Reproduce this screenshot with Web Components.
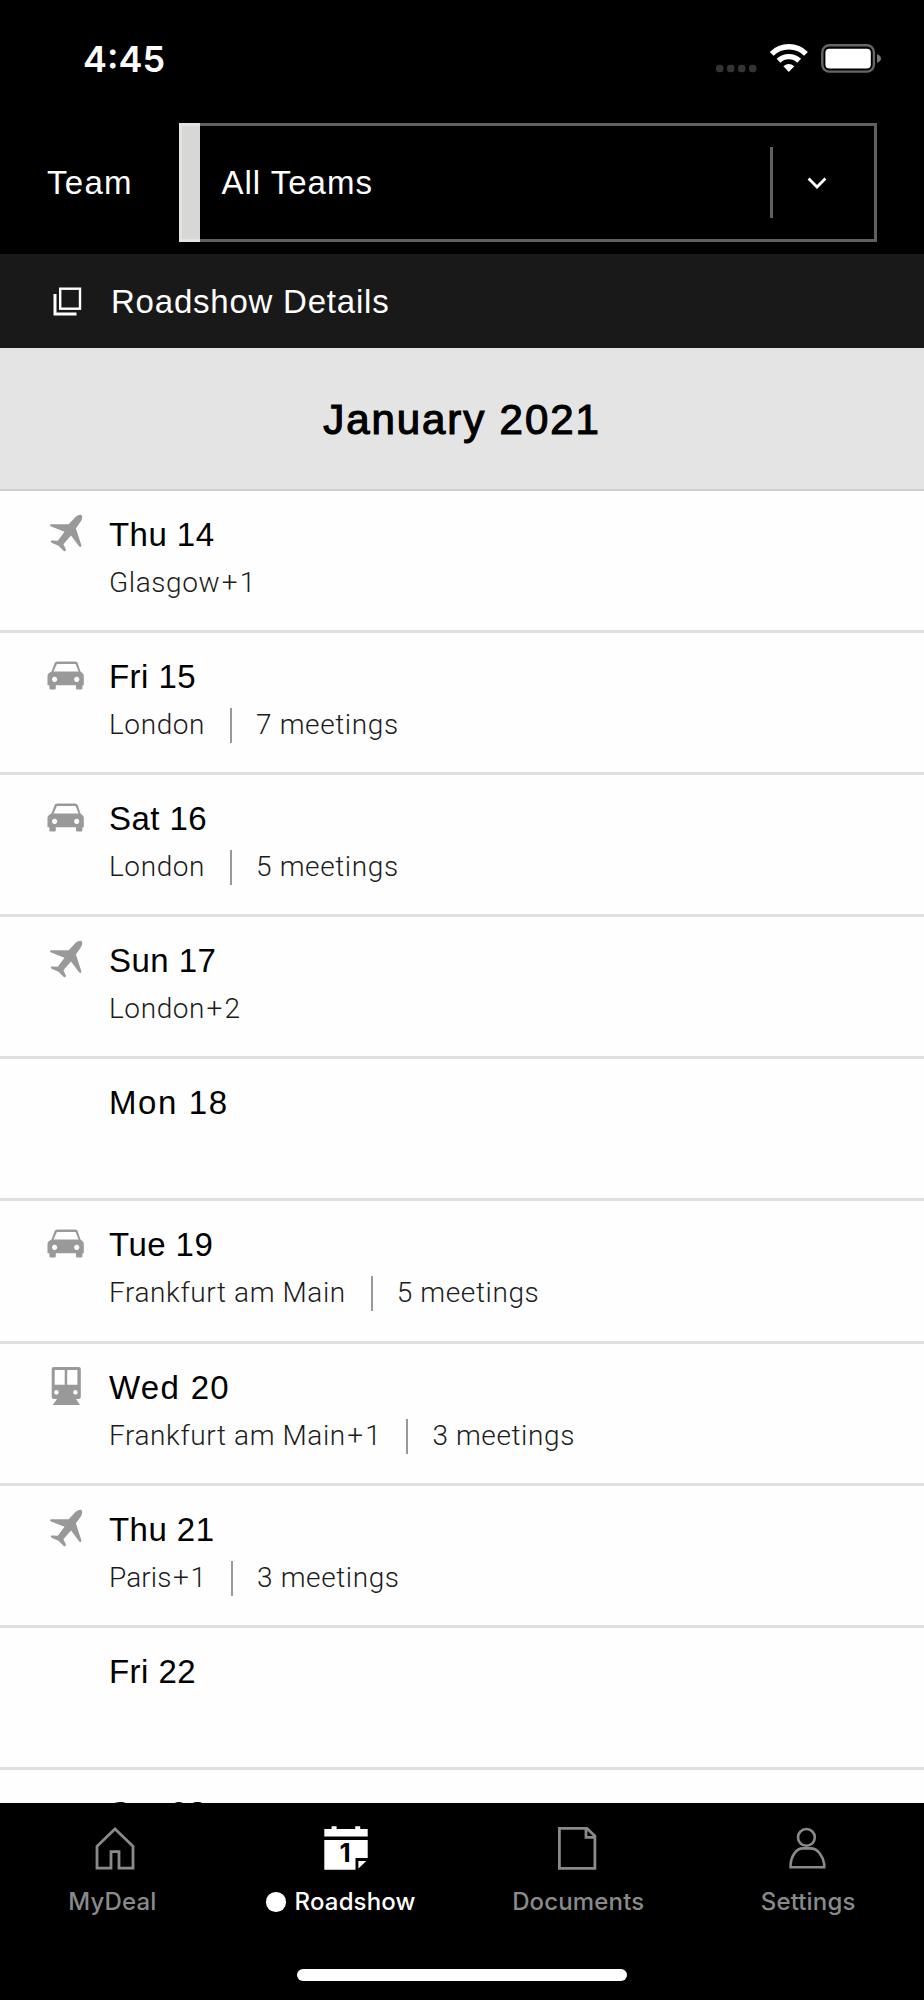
<!DOCTYPE html>
<html lang="en">
<head>
<meta charset="utf-8">
<title>Roadshow</title>
<style>
  * {
    box-sizing: border-box;
  }
  body {
    margin: 0;
    background: #fff;
    font-family: "Liberation Sans", Arial, sans-serif;
  }
</style>
</head>
<body>
<roadshow-app></roadshow-app>

<script>
const TRAVEL_ICONS = {
  plane: `<path d="M28.7 2.7C31 .8 33.5 .2 34.6 1.2C35.5 2.2 35.4 4.4 34.4 6.4L28.9 14.5L34.2 30.7C34.6 32.7 33.4 33.9 32 32.3L24 21.5L16.4 30.3L18.8 35.2C19.2 37.2 17.6 38.1 16.2 36.6L11.6 31.8L5 29C3.4 28.2 3.6 26.5 5.2 26.6L10.8 26.7L17.5 17.8L4.2 12.6C2.6 11.8 2.7 10.3 4.6 10.3L21.7 10.3Z"/>`,
  car: `<path fill-rule="evenodd" d="M10.2 5.4H28.4Q30.2 5.4 30.7 7L33.5 15.6L35.6 17.2Q36.8 18.2 36.8 20V29.2H35.4V32.2Q35.4 33.4 34.2 33.4H30.2Q29 33.4 29 32.2V29.2H8.8V32.2Q8.8 33.4 7.6 33.4H3.6Q2.4 33.4 2.4 32.2V29.2H.5V20Q.5 18.2 1.7 17.2L4.5 15.6L7.7 7Q8.3 5.4 10.2 5.4ZM9.9 7.9L6.5 15.5H31.6L28.6 7.9ZM7.6 20.8a2.6 2.6 0 1 0 .01 0ZM29.7 20.8a2.6 2.6 0 1 0 .01 0Z"/>`,
  train: `<path fill-rule="evenodd" d="M6.6 0H31.8Q33.8 0 33.8 2V30Q33.8 32 31.8 32H29L33 38H5.7L10 32H6.6Q4.7 32 4.7 30V2Q4.7 0 6.6 0ZM7.7 3.1V17.7H17.7V3.1ZM20.2 3.1V17.7H30.4V3.1ZM9.4 23.1a2.3 2.3 0 1 0 .01 0ZM28.4 23.1a2.3 2.3 0 1 0 .01 0Z"/>`
};

const TAB_ICONS = {
  home: `<path fill="none" stroke="currentColor" stroke-width="2.8" d="M4 42.2V20.3L22 3L40 20.3V42.2H26V25.7H18V42.2Z"/>`,
  calendar: `
    <path fill="currentColor" d="M.3 3H7.6V.3H12.6V3H31.2V.3H36.2V3H43.7V10.6H.3ZM.3 14H43.7V32H31.5V43.7H.3ZM34.4 35H42.3L34.4 42.6Z"/>
    <text x="15.6" y="36.3" fill="#000" font-family="Inter, sans-serif" font-weight="700" font-size="26">1</text>`,
  document: `<path fill="none" stroke="currentColor" stroke-width="2.8" d="M4.4 2.4H32L39.9 10V42.3H4.4ZM31 2.4V11.4H39.9"/>`,
  user: `<g fill="none" stroke="currentColor" stroke-width="2.6"><circle cx="20.4" cy="11.4" r="8.4"/><path d="M4.6 41.3V38C5.4 30 10 22.4 17 22.4H24.5C32 22.4 36.8 30 38.2 38V41.3Z"/></g>`
};

class StatusBar extends HTMLElement {
  constructor() {
    super();
    const shadow = this.attachShadow({ mode: "open" });
    shadow.innerHTML = `
      <style>
        :host {
          box-sizing: border-box;
          display: flex;
          justify-content: space-between;
          height: 123px;
          padding: 36px 43px 0 83px;
          color: #fff;
          font: 600 36px/46px Inter, sans-serif;
        }
        .icons {
          display: flex;
          align-items: flex-start;
        }
        svg { display: block; }
      </style>
      <span><slot></slot></span>
      <div class="icons">
        <svg width="165" height="44" viewBox="716 36 165 44">
          <g fill="#343434">
            <rect x="716" y="64.8" width="7.4" height="7.4" rx="3"/>
            <rect x="727" y="64.8" width="7.4" height="7.4" rx="3"/>
            <rect x="738" y="64.8" width="7.4" height="7.4" rx="3"/>
            <rect x="749" y="64.8" width="7.4" height="7.4" rx="3"/>
          </g>
          <g fill="none" stroke="#fff" stroke-width="5.4">
            <path d="M771.7 53.8A24.4 24.4 0 0 1 806 53.8"/>
            <path d="M778.5 60.8A14.8 14.8 0 0 1 799.2 60.8"/>
          </g>
          <path fill="#fff" d="M783.4 66.2Q788.8 61.8 794.3 66.2L788.8 72Z"/>
          <rect x="822.3" y="45.2" width="51.6" height="26.4" rx="7" fill="none" stroke="#666" stroke-width="2.4"/>
          <rect x="825.4" y="48.8" width="45.4" height="19.6" rx="4" fill="#fff"/>
          <path fill="#777" d="M877 54.2Q881 55.5 881 58.5T877 62.8Z"/>
        </svg>
      </div>
    `;
  }
}

class TeamSelect extends HTMLElement {
  constructor() {
    super();
    const shadow = this.attachShadow({ mode: "open" });
    shadow.innerHTML = `
      <style>
        * { box-sizing: border-box; }
        :host {
          box-sizing: border-box;
          display: flex;
          align-items: center;
          height: 131px;
          padding: 0 47px 12px 47px;
          color: #fff;
          font-size: 33px;
          line-height: 40px;
        }
        .label {
          width: 131.5px;
          padding-top: 1px;
          letter-spacing: 1.3px;
        }
        .box {
          display: flex;
          align-items: center;
          flex: 1;
          height: 119px;
          border: 3px solid #606060;
          border-left: 0;
        }
        .stripe {
          width: 21.5px;
          height: 119px;
          margin: -3px 0;
          background: #d7d7d5;
          border: 3px solid #e3e3e1;
          border-right: 0;
        }
        .value {
          flex: 1;
          padding: 1px 0 0 21.5px;
          letter-spacing: 1px;
        }
        .arrow {
          display: flex;
          align-items: center;
          width: 104.5px;
          height: 71px;
          padding-left: 33px;
          border-left: 3px solid #606060;
        }
      </style>
      <span class="label"><slot name="label"></slot></span>
      <div class="box">
        <div class="stripe"></div>
        <span class="value"><slot></slot></span>
        <div class="arrow">
          <svg width="22" height="16" viewBox="0 0 22 16"><path d="M2.6 3.4L11 12L19.4 3.4" fill="none" stroke="#fff" stroke-width="2.8"/></svg>
        </div>
      </div>
    `;
  }
}

class DetailsBar extends HTMLElement {
  constructor() {
    super();
    const shadow = this.attachShadow({ mode: "open" });
    shadow.innerHTML = `
      <style>
        :host {
          display: flex;
          align-items: center;
          gap: 29px;
          height: 94px;
          padding-left: 53px;
          background: #191919;
          color: #fff;
          font-size: 33px;
          letter-spacing: 0.78px;
        }
        span { padding-top: 2px; }
      </style>
      <svg width="29" height="29" viewBox="0 0 29 29" fill="none" stroke="#fff" stroke-width="2.4">
        <rect x="7.2" y="1.7" width="19.8" height="20"/>
        <path stroke-width="3" d="M2 7V26.9H23.5"/>
      </svg>
      <span><slot></slot></span>
    `;
  }
}

class MonthHeader extends HTMLElement {
  constructor() {
    super();
    const shadow = this.attachShadow({ mode: "open" });
    shadow.innerHTML = `
      <style>
        :host {
          box-sizing: border-box;
          display: block;
          height: 143px;
          padding-top: 48px;
          background: #e4e4e4;
          border-bottom: 2px solid #cdcdcd;
          color: #000;
          text-align: center;
          font-size: 42px;
          line-height: 48px;
          letter-spacing: 1.9px;
          -webkit-text-stroke: 1.2px #000;
        }
      </style>
      <slot></slot>
    `;
  }
}

class DayRow extends HTMLElement {
  constructor() {
    super();
    const icon = this.getAttribute("icon");
    const city = (this.getAttribute("city") || "").replace("+", `<span class="plus">+</span>`);
    const meetings = this.getAttribute("meetings");

    const shadow = this.attachShadow({ mode: "open" });
    shadow.innerHTML = `
      <style>
        :host {
          box-sizing: border-box;
          display: flex;
          gap: 24px;
          height: 142.1px;
          padding: 23px 0 0 47px;
          border-bottom: 3px solid #e0e0e0;
        }
        .icon {
          width: 38px;
          height: 38px;
          fill: #999;
        }
        .day {
          color: #000;
          font-size: 33px;
          line-height: 41px;
          letter-spacing: var(--track, 0.45px);
        }
        .info {
          display: flex;
          height: 35px;
          margin-top: 11px;
          color: #1c1c1c;
          font: 300 28px/34px Roboto, sans-serif;
          letter-spacing: var(--info-track, 0.6px);
        }
        .plus { margin: 0 1.5px; }
        .meetings {
          margin-left: 25px;
          padding-left: 24px;
          border-left: 2px solid #999;
          letter-spacing: 0.6px;
        }
      </style>
      <svg class="icon" viewBox="0 0 38 38">${icon ? TRAVEL_ICONS[icon] : ""}</svg>
      <div>
        <div class="day"><slot></slot></div>
        ${city ? `<div class="info"><span>${city}</span>${meetings ? `<span class="meetings">${meetings} meetings</span>` : ""}</div>` : ""}
      </div>
    `;
  }
}

class TabItem extends HTMLElement {
  constructor() {
    super();
    const shadow = this.attachShadow({ mode: "open" });
    shadow.innerHTML = `
      <style>
        :host {
          display: flex;
          flex-direction: column;
          align-items: center;
          width: 230.9px;
          color: #8a8a8a;
        }
        :host([active]) { color: #fff; }
        svg { display: block; }
        .label {
          display: flex;
          align-items: center;
          gap: 9px;
          margin: 17px var(--shift, 0) 0 0;
          font: 500 24px/30px Inter, sans-serif;
          letter-spacing: 0.15px;
        }
        :host([active]) .label::before {
          content: "";
          width: 19.5px;
          height: 19.5px;
          border-radius: 50%;
          background: #fff;
        }
      </style>
      <svg width="44" height="44" viewBox="0 0 44 44">${TAB_ICONS[this.getAttribute("icon")]}</svg>
      <span class="label"><slot></slot></span>
    `;
  }
}

class TabBar extends HTMLElement {
  constructor() {
    super();
    const shadow = this.attachShadow({ mode: "open" });
    shadow.innerHTML = `
      <style>
        :host {
          box-sizing: border-box;
          display: flex;
          flex-direction: column;
          justify-content: space-between;
          align-items: center;
          height: 197px;
          padding: 23px 0 19px;
          background: #000;
        }
        .tabs {
          display: flex;
          width: 924px;
        }
        .home-indicator {
          width: 330px;
          height: 12px;
          border-radius: 6px;
          background: #fff;
        }
      </style>
      <div class="tabs"><slot></slot></div>
      <div class="home-indicator"></div>
    `;
  }
}

class RoadshowApp extends HTMLElement {
  constructor() {
    super();
    const shadow = this.attachShadow({ mode: "open" });
    shadow.innerHTML = `
      <style>
        :host {
          display: flex;
          flex-direction: column;
          width: 924px;
          height: 2000px;
          overflow: hidden;
        }
        header { background: #000; }
        main {
          flex: 1;
          min-height: 0;
          overflow: hidden;
          background: #fefefe;
        }
      </style>
      <header>
        <status-bar>4:45</status-bar>
        <team-select><span slot="label">Team</span>All Teams</team-select>
        <details-bar>Roadshow Details</details-bar>
      </header>
      <main>
        <month-header>January 2021</month-header>
        <day-row icon="plane" city="Glasgow+1">Thu 14</day-row>
        <day-row icon="car" city="London" meetings="7">Fri 15</day-row>
        <day-row icon="car" city="London" meetings="5">Sat 16</day-row>
        <day-row icon="plane" city="London+2">Sun 17</day-row>
        <day-row style="--track: 1.6px">Mon 18</day-row>
        <day-row icon="car" city="Frankfurt am Main" meetings="5">Tue 19</day-row>
        <day-row icon="train" city="Frankfurt am Main+1" meetings="3" style="--track: 1.3px">Wed 20</day-row>
        <day-row icon="plane" city="Paris+1" meetings="3" style="--info-track: 0.1px">Thu 21</day-row>
        <day-row>Fri 22</day-row>
        <day-row>Sat 23</day-row>
      </main>
      <tab-bar>
        <tab-item icon="home" style="--shift: 6px">MyDeal</tab-item>
        <tab-item icon="calendar" active style="--shift: 11px">Roadshow</tab-item>
        <tab-item icon="document" style="--shift: -2px">Documents</tab-item>
        <tab-item icon="user">Settings</tab-item>
      </tab-bar>
    `;
  }
}

customElements.define("status-bar", StatusBar);
customElements.define("team-select", TeamSelect);
customElements.define("details-bar", DetailsBar);
customElements.define("month-header", MonthHeader);
customElements.define("day-row", DayRow);
customElements.define("tab-item", TabItem);
customElements.define("tab-bar", TabBar);
customElements.define("roadshow-app", RoadshowApp);
</script>
</body>
</html>
